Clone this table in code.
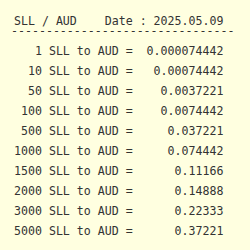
import React from "react";

const rows: [string, string][] = [
  ["1", "0.000074442"],
  ["10", "0.00074442"],
  ["50", "0.0037221"],
  ["100", "0.0074442"],
  ["500", "0.037221"],
  ["1000", "0.074442"],
  ["1500", "0.11166"],
  ["2000", "0.14888"],
  ["3000", "0.22333"],
  ["5000", "0.37221"],
];

export default function App() {
  return (
    <div
      className="w-[250px] h-[250px] bg-[#ffffe0] text-[#333333] text-[11.6px] whitespace-pre pl-[14px] pt-[16px] overflow-hidden"
      style={{ fontFamily: '"DejaVu Sans Mono", monospace' }}
    >
      <div className="leading-[10px]">{"SLL / AUD    Date : 2025.05.09"}</div>
      <div className="leading-[10px] mb-[5px] -ml-[3px]">{"-".repeat(32)}</div>
      {rows.map(([n, v]) => (
        <div key={n} className="leading-[20px]">
          {n.padStart(4, " ") + " SLL to AUD = " + v.padStart(12, " ")}
        </div>
      ))}
    </div>
  );
}
